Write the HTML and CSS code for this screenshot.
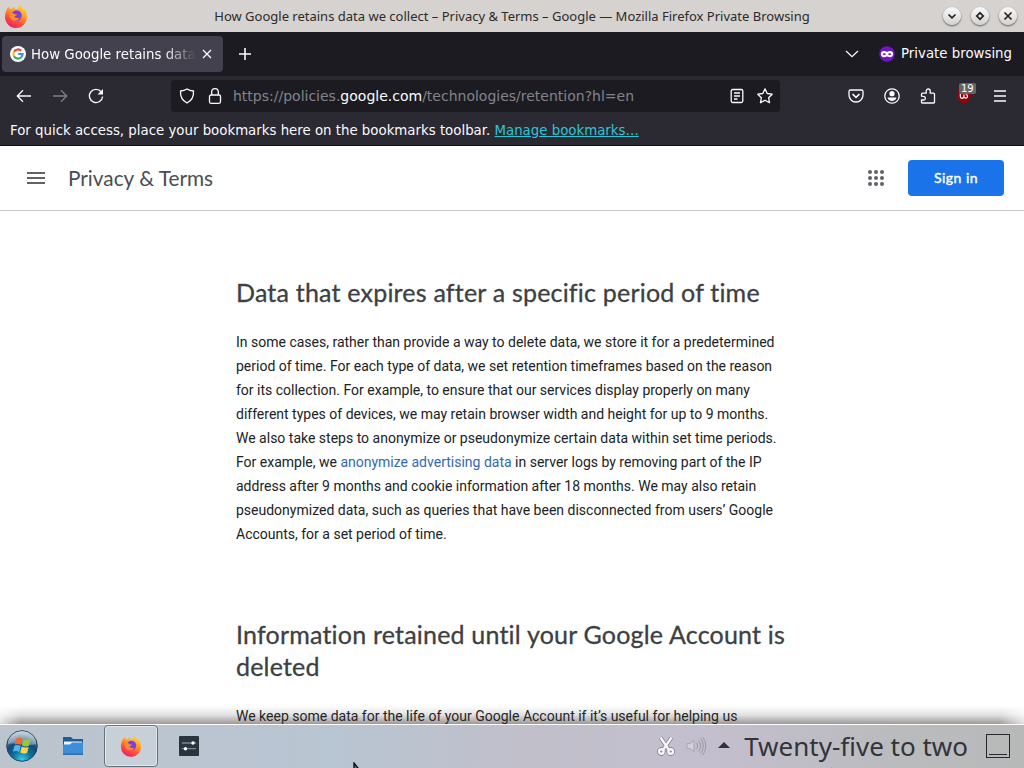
FILE: index.html
```html
<!DOCTYPE html>
<html lang="en">
<head>
<meta charset="UTF-8">
<meta name="viewport" content="width=device-width, initial-scale=1.0">
<title>How Google retains data we collect – Privacy &amp; Terms – Google</title>
<link rel="stylesheet" href="styles.css">
</head>
<body>
  <svg width="0" height="0" class="defs">
    <defs>
      <linearGradient id="fire" x1="0.8" y1="0" x2="0.3" y2="1">
        <stop offset="0" stop-color="#ffdc3a"/>
        <stop offset="0.4" stop-color="#ff9a28"/>
        <stop offset="0.7" stop-color="#ff4b3c"/>
        <stop offset="1" stop-color="#ec1c6c"/>
      </linearGradient>
      <symbol id="firefox" viewBox="0 0 24 24">
        <path fill="url(#fire)" d="M3 5l1.500-2.500L6.500 5l2-.5L10 2.500l1.500 2.500h2L15 1c3 2 4 3.500 4.500 5.500l1-1C22.500 8 23 10.500 23 13a11 11 0 0 1-22 0c0-3 .8-5.500 2-8z"/>
        <circle cx="12.500" cy="11.500" r="5.200" fill="#7b3fe0"/>
        <path fill="#ff8b2b" d="M5 9c2-1 4-.5 5 1l3 .3c0 1.300-1.500 1.500-2.500 2 .3 2 3 2.700 5 1.200-1 3.500-6 4.500-8.500 1.500C5.500 13.500 5 11 5 9z"/>
      </symbol>
    </defs>
  </svg>

  <div class="titlebar">
    <svg class="title-logo" width="24" height="24"><use href="#firefox"/></svg>
    <div class="title-text">How Google retains data we collect – Privacy &amp; Terms – Google — Mozilla Firefox Private Browsing</div>
    <div class="title-buttons">
      <span class="win-btn"><svg width="18" height="18" viewBox="0 0 18 18"><path d="M5.500 7.500L9 10.800l3.500-3.300"/></svg></span>
      <span class="win-btn"><svg width="18" height="18" viewBox="0 0 18 18"><path d="M9 5.800L12.200 9 9 12.200 5.800 9z"/></svg></span>
      <span class="win-btn"><svg width="18" height="18" viewBox="0 0 18 18"><path d="M5.500 5.500l7 7M12.500 5.500l-7 7"/></svg></span>
    </div>
  </div>

  <div class="tabs">
    <div class="tab">
      <svg width="16" height="16" viewBox="0 0 16 16">
        <circle cx="8" cy="8" r="8" fill="#fff"/>
        <g fill="none" stroke-width="2.100">
          <path stroke="#ea4335" d="M4 5.700A4.600 4.600 0 0 1 11.300 4.800"/>
          <path stroke="#fbbc05" d="M4 10.300a4.600 4.600 0 0 1 0-4.600"/>
          <path stroke="#34a853" d="M11 11.500A4.600 4.600 0 0 1 4 10.300"/>
          <path stroke="#4285f4" d="M8.200 8h4.400A4.600 4.600 0 0 1 11 11.500"/>
        </g>
      </svg>
      <span class="tab-label">How Google retains data</span>
      <svg class="line" width="10" height="10" viewBox="0 0 10 10"><path d="M1 1l8 8M9 1L1 9"/></svg>
    </div>
    <svg class="line new-tab" width="14" height="14" viewBox="0 0 14 14"><path d="M7 1v12M1 7h12"/></svg>
    <div class="private">
      <svg class="line" width="14" height="8" viewBox="0 0 14 8"><path d="M1 1l6 5.700L13 1"/></svg>
      <svg class="mask" width="16" height="16" viewBox="0 0 16 16">
        <circle cx="8" cy="8" r="7.800" fill="#7016c9"/>
        <path fill="none" stroke="#fff" stroke-width="2.100" d="M8 7.400C6.500 5.700 3 5.500 2.900 8c.1 3 3.800 2.700 5.100.6 1.300 2.100 5 2.400 5.100-.6C13 5.500 9.500 5.700 8 7.400z"/>
      </svg>
      <span class="private-label">Private browsing</span>
    </div>
  </div>

  <div class="nav">
    <div class="nav-left">
      <svg class="line" width="16" height="16" viewBox="0 0 16 16"><path d="M15 8H1.500M7 2.300L1.300 8 7 13.700"/></svg>
      <svg class="line dim" width="16" height="16" viewBox="0 0 16 16"><path d="M1 8h13.500M9 2.300L14.700 8 9 13.700"/></svg>
      <svg class="line" width="16" height="16" viewBox="0 0 16 16"><path d="M13.300 4A6.600 6.600 0 1 0 14.600 8.500"/><path fill="#fbfbfe" stroke="none" d="M15 1v5.500H9.500z"/></svg>
    </div>
    <div class="urlbar">
      <svg class="line" width="16" height="16" viewBox="0 0 16 16"><path d="M8 1C6 2.300 3.700 2.900 1.500 3c-.3 5 1.500 9.500 6.500 12 5-2.500 6.800-7 6.500-12C12.300 2.900 10 2.300 8 1z"/></svg>
      <svg class="line lock" width="16" height="16" viewBox="0 0 16 16"><rect x="2.500" y="7" width="11" height="8.300" rx="1.500"/><path d="M4.700 7V4a3.300 3.300 0 0 1 6.600 0v3"/></svg>
      <span class="url">https://policies.<b>google.com</b>/technologies/retention?hl=en</span>
      <svg class="line" width="16" height="16" viewBox="0 0 16 16"><rect x="2.200" y="1.500" width="11.600" height="13" rx="1.500"/><path d="M5 5h6M5 8h6M5 11h3.500"/></svg>
      <svg class="line star" width="16" height="16" viewBox="0 0 16 16"><path stroke-linejoin="round" d="M8 .9l2.200 4.600 5 .7-3.600 3.500.9 5L8 12.300l-4.500 2.400.9-5L.8 6.200l5-.7z"/></svg>
    </div>
    <div class="nav-right">
      <svg class="line" width="16" height="16" viewBox="0 0 16 16"><path d="M2.500 2h11a1.500 1.500 0 0 1 1.500 1.500V7A7 7 0 0 1 1 7V3.500A1.500 1.500 0 0 1 2.500 2z"/><path stroke-width="1.600" d="M4.500 6L8 9.300 11.500 6"/></svg>
      <svg class="line" width="16" height="16" viewBox="0 0 16 16"><circle cx="8" cy="8" r="7.200"/><circle cx="8" cy="5.700" r="2.600" fill="#fbfbfe" stroke="none"/><path fill="#fbfbfe" stroke="none" d="M3.500 9.500h9c-.3 2-2.500 3.600-4.500 3.600s-4.200-1.600-4.500-3.600z"/></svg>
      <svg class="line" width="16" height="16" viewBox="0 0 16 16"><path stroke-linejoin="round" d="M1.500 8.200V6.200c0-.6.400-1 1-1h3.700V3a2 2 0 0 1 4 0v2.200h3.300c.6 0 1 .4 1 1v8c0 .5-.3.800-.8.800H2.300c-.5 0-.8-.3-.8-.8V12h2a1.800 1.800 0 0 0 0-3.700z"/></svg>
      <span class="ublock">
        <svg width="16" height="16" viewBox="0 0 16 16"><path fill="#960008" d="M8 0c2 1.500 4.500 2 7 2 0 7-.5 10.500-7 14C1.500 12.500 1 9 1 2c2.500 0 5-.5 7-2z"/><path fill="none" stroke="#fff" stroke-width="1.200" d="M4.300 6v2.500a1.800 1.800 0 0 0 3.600 0V6.500M7.900 8.500a1.800 1.800 0 1 0 1.800-2"/></svg>
        <span class="badge">19</span>
      </span>
      <svg class="line" width="16" height="16" viewBox="0 0 16 16"><path d="M2 3h12M2 8h12M2 13h12"/></svg>
    </div>
  </div>

  <div class="bookmarks"><span>For quick access, place your bookmarks here on the bookmarks toolbar. <a href="#">Manage bookmarks…</a></span></div>

  <div class="page">
    <div class="header">
      <svg width="18" height="12" viewBox="0 0 18 12"><path fill="#5f6368" d="M0 0h18v2H0zM0 5h18v2H0zM0 10h18v2H0z"/></svg>
      <span class="site-name">Privacy &amp; Terms</span>
      <svg class="apps" width="16" height="16" viewBox="0 0 16 16" fill="#5f6368">
        <circle cx="2" cy="2" r="2"/><circle cx="8" cy="2" r="2"/><circle cx="14" cy="2" r="2"/>
        <circle cx="2" cy="8" r="2"/><circle cx="8" cy="8" r="2"/><circle cx="14" cy="8" r="2"/>
        <circle cx="2" cy="14" r="2"/><circle cx="8" cy="14" r="2"/><circle cx="14" cy="14" r="2"/>
      </svg>
      <a class="sign-in" href="#">Sign in</a>
    </div>
    <div class="content">
      <h2>Data that expires after a specific period of time</h2>
      <p>In some cases, rather than provide a way to delete data, we store it for a predetermined<br>
      period of time. For each type of data, we set retention timeframes based on the reason<br>
      for its collection. For example, to ensure that our services display properly on many<br>
      different types of devices, we may retain browser width and height for up to 9 months.<br>
      We also take steps to anonymize or pseudonymize certain data within set time periods.<br>
      For example, we <a href="#">anonymize advertising data</a> in server logs by removing part of the IP<br>
      address after 9 months and cookie information after 18 months. We may also retain<br>
      pseudonymized data, such as queries that have been disconnected from users’ Google<br>
      Accounts, for a set period of time.</p>
      <h2>Information retained until your Google Account is<br>deleted</h2>
      <p>We keep some data for the life of your Google Account if it’s useful for helping us</p>
    </div>
    <div class="shade"></div>
  </div>

  <div class="taskbar">
    <svg class="start" width="32" height="32" viewBox="0 0 32 32">
      <defs>
        <radialGradient id="orb" cx="0.5" cy="0.95" r="0.9">
          <stop offset="0" stop-color="#35d0e8"/>
          <stop offset="0.35" stop-color="#0b6f9f"/>
          <stop offset="0.65" stop-color="#164a75"/>
          <stop offset="1" stop-color="#a9bccb"/>
        </radialGradient>
      </defs>
      <circle cx="16" cy="16" r="15.300" fill="url(#orb)" stroke="#23445f"/>
      <path fill="#fff" opacity="0.35" d="M2 14a14 13 0 0 1 28 0c-8 3-18-2-28 0z"/>
      <path fill="#ef6a2c" d="M10.500 8.500c2-1 4-.8 6 .3L15 15c-2-1.300-4-1.300-6.200-.4z"/>
      <path fill="#9ac83c" d="M17.500 9.300c2.200 1.200 4.500 1.300 7 .3L23 15.700c-2.300 1-4.700 1-7-.2z"/>
      <path fill="#56b4ea" d="M8.500 15.700c2.200-1 4.200-.8 6.200.4l-1.500 6c-2-1.200-4-1.300-6.300-.4z"/>
      <path fill="#fbd24a" d="M15.700 16.600c2.200 1.200 4.500 1.300 7 .3l-1.600 6c-2.300 1-4.600.9-6.900-.3z"/>
    </svg>
    <div class="task">
      <svg width="20" height="18" viewBox="0 0 20 18">
        <path fill="#1f5c94" d="M0 0h8l2 2h10v8H0z"/>
        <path fill="#e9f5fb" d="M1 4.500h18V9H1z"/>
        <path fill="#3f8dd6" d="M0 7.500h7l2-2h11V18H0z"/>
        <path fill="#2b6fb6" d="M0 16.500h20V18H0z"/>
      </svg>
    </div>
    <div class="task active"><svg width="22" height="22"><use href="#firefox"/></svg></div>
    <div class="task">
      <svg width="20" height="20" viewBox="0 0 20 20">
        <rect width="20" height="20" rx="1" fill="#2b333c"/>
        <path stroke="#6f8ba0" stroke-width="1.300" d="M3 7h14M3 12.700h14"/>
        <circle cx="14" cy="7" r="1.700" fill="#fff"/><circle cx="6.500" cy="12.700" r="1.700" fill="#fff"/>
      </svg>
    </div>
    <div class="tray">
      <svg width="18" height="20" viewBox="0 0 18 20">
        <g fill="none" stroke="#77727f" stroke-width="3.800"><path d="M3.500 1.500L12 14M14.500 1.500L6 14"/><circle cx="4.300" cy="15.500" r="2.300"/><circle cx="13.700" cy="15.500" r="2.300"/></g>
        <g fill="none" stroke="#f8f7fb" stroke-width="2.400"><path d="M3.500 1.500L12 14M14.500 1.500L6 14"/><circle cx="4.300" cy="15.500" r="2.300"/><circle cx="13.700" cy="15.500" r="2.300"/></g>
      </svg>
      <svg class="volume" width="21" height="20" viewBox="0 0 21 20">
        <path fill="#d2d0d8" stroke="#a09ea8" stroke-width=".8" d="M1 7.500h3l4-3v11l-4-3H1z"/>
        <path fill="none" stroke="#9b99a4" d="M10.500 7a5 5 0 0 1 0 6M12.500 4.500a8.500 8.500 0 0 1 0 11M14.700 2.500a12 12 0 0 1 0 15M16.800 1a15 15 0 0 1 0 18"/>
      </svg>
      <svg class="arrow" width="12" height="6" viewBox="0 0 12 6"><path fill="#2f3038" d="M6 0l6 6H0z"/></svg>
      <span class="clock">Twenty-five to two</span>
      <span class="show-desktop"></span>
    </div>
    <svg class="cursor" width="10" height="16" viewBox="0 0 10 16"><path fill="#59706f" stroke="#060a0a" stroke-width="1.300" d="M1 1v13l3-3h5z"/></svg>
  </div>
</body>
</html>
```
FILE: styles.css
```css
body {
  display: flex;
  flex-direction: column;
  width: 1024px;
  height: 768px;
  margin: 0;
  overflow: hidden;
  background: #fff;
  font-family: "DejaVu Sans", sans-serif;
  white-space: nowrap;
}
svg {
  display: block;
  flex-shrink: 0;
}
.defs {
  position: absolute;
}
.line {
  fill: none;
  stroke: #fbfbfe;
  stroke-width: 1.3;
}
.dim {
  opacity: 0.4;
}

/* window title */
.titlebar {
  display: flex;
  align-items: center;
  height: 32px;
  padding: 0 7px 0 4px;
  box-sizing: border-box;
  background: #d6d2cf;
}
.title-text {
  flex: 1;
  padding-left: 53px;
  text-align: center;
  font-family: "Noto Sans", sans-serif;
  font-size: 13px;
  color: #2b2b2b;
}
.title-buttons {
  display: flex;
  gap: 10px;
}
.win-btn {
  width: 18px;
  height: 18px;
  border-radius: 50%;
  background: linear-gradient(#fafafa, #d4d2d0);
  box-shadow: 0 1px 2px #555;
}
.win-btn path {
  fill: none;
  stroke: #222;
  stroke-width: 1.7;
}

/* tab strip */
.tabs {
  display: flex;
  align-items: center;
  height: 44px;
  padding: 0 12px 0 2px;
  box-sizing: border-box;
  background: #1c1b22;
}
.tab {
  display: flex;
  align-items: center;
  width: 221px;
  height: 36px;
  padding: 0 11px 0 8px;
  box-sizing: border-box;
  border-radius: 4px;
  background: #42414d;
}
.tab-label {
  width: 165px;
  margin: 0 6px 0 5px;
  font-size: 13.33px;
  color: #fbfbfe;
  -webkit-mask-image: linear-gradient(to left, transparent, #000 32px);
  mask-image: linear-gradient(to left, transparent, #000 32px);
}
.new-tab {
  margin-left: 15px;
  stroke-width: 1.6;
}
.private {
  display: flex;
  align-items: center;
  margin-left: auto;
}
.mask {
  margin: 0 6px 0 20px;
}
.private-label {
  padding-bottom: 2px;
  font-size: 13.33px;
  color: #fbfbfe;
}

/* navigation */
.nav {
  display: flex;
  align-items: center;
  height: 40px;
  padding: 0 16px;
  background: #2b2a33;
}
.nav-left {
  display: flex;
  gap: 20px;
}
.urlbar {
  display: flex;
  align-items: center;
  width: 609px;
  height: 32px;
  margin-left: 67px;
  padding: 0 7px 0 8px;
  box-sizing: border-box;
  border-radius: 4px;
  background: #1c1b22;
}
.lock {
  margin: 0 10px 0 12px;
}
.url {
  flex: 1;
  font-size: 14px;
  color: #84838c;
}
.url b {
  font-weight: normal;
  color: #fbfbfe;
}
.star {
  margin-left: 12px;
}
.nav-right {
  display: flex;
  gap: 20px;
  margin-left: auto;
}
.ublock {
  position: relative;
}
.badge {
  position: absolute;
  top: -5px;
  left: 3px;
  padding: 0 2px;
  border-radius: 2px;
  background: #666;
  font-size: 10px;
  line-height: 11px;
  color: #fff;
}
.bookmarks {
  height: 30px;
  padding-left: 10px;
  box-sizing: border-box;
  border-bottom: 1px solid #0c0c0d;
  background: #2b2a33;
  font-size: 13.33px;
  line-height: 30px;
  color: #fbfbfe;
}
.bookmarks a {
  color: #2bc6d6;
}

/* page */
.page {
  position: relative;
  height: 578px;
  overflow: hidden;
  background: #fff;
}
.header {
  display: flex;
  align-items: center;
  height: 65px;
  padding: 0 20px 1px 27px;
  box-sizing: border-box;
  border-bottom: 1px solid #c8cacd;
}
.site-name {
  margin-left: 23px;
  font-family: Lato, sans-serif;
  font-size: 20.8px;
  color: #4a4d51;
}
.apps {
  margin-left: auto;
}
.sign-in {
  width: 96px;
  height: 36px;
  margin-left: 24px;
  border-radius: 4px;
  background: #1a73e8;
  text-align: center;
  text-decoration: none;
  font-family: Lato, sans-serif;
  font-size: 14px;
  letter-spacing: 0.5px;
  line-height: 36px;
  color: #fff;
  -webkit-text-stroke: 0.4px #fff;
}
.content {
  width: 552px;
  margin: 65px 0 0 236px;
}
.content h2 {
  margin: 0 0 22px;
  font-family: Lato, sans-serif;
  font-size: 25px;
  font-weight: normal;
  font-variant-ligatures: none;
  letter-spacing: 0.2px;
  line-height: 32px;
  color: #3c4043;
  -webkit-text-stroke: 0.3px #3c4043;
}
.content p {
  margin: 0 0 72px;
  font-family: Roboto, sans-serif;
  font-size: 14px;
  line-height: 24px;
  color: #202124;
}
.content p a {
  color: #3367b8;
  text-decoration: none;
}
.shade {
  position: absolute;
  left: 0;
  right: 0;
  bottom: 0;
  height: 18px;
  background: linear-gradient(rgba(60, 50, 50, 0), rgba(60, 50, 50, 0.15) 50%, rgba(60, 50, 50, 0.5));
  -webkit-mask-image: linear-gradient(to right, rgba(0, 0, 0, 0.3), #000 20px, #000 1000px, rgba(0, 0, 0, 0.3));
  mask-image: linear-gradient(to right, rgba(0, 0, 0, 0.3), #000 20px, #000 1000px, rgba(0, 0, 0, 0.3));
}

/* desktop panel */
.taskbar {
  position: relative;
  display: flex;
  align-items: center;
  height: 44px;
  padding: 0 14px 1px 6px;
  box-sizing: border-box;
  border-top: 1px solid #fff;
  background: linear-gradient(to right, #bcc4cd, #b8c5d2 32%, #c1bfca 52%, #c4bfcf 68%, #babbbd 88%, #b7b9b9);
}
.task {
  display: flex;
  align-items: center;
  justify-content: center;
  width: 54px;
  height: 42px;
  margin-left: 2px;
  box-sizing: border-box;
}
.start + .task {
  margin-left: 8px;
}
.task.active {
  margin: 0 2px 0 4px;
  border: 1px solid #68717b;
  border-radius: 4px;
  background: rgba(255, 255, 255, 0.2);
  box-shadow: inset 0 0 0 1px rgba(255, 255, 255, 0.5);
}
.tray {
  display: flex;
  align-items: center;
  margin-left: auto;
}
.volume {
  margin-left: 11px;
}
.arrow {
  margin: 0 0 3px 11px;
}
.clock {
  margin: 0 18px 0 14px;
  font-family: "Noto Sans", sans-serif;
  font-size: 26px;
  line-height: 36px;
  color: #31343a;
}
.show-desktop {
  width: 24px;
  height: 24px;
  box-sizing: border-box;
  border: 1px solid #25282c;
  background: linear-gradient(#25282c, #25282c) 50% 19px / 18px 1px no-repeat;
}
.cursor {
  position: absolute;
  left: 353px;
  top: 37px;
}
```
